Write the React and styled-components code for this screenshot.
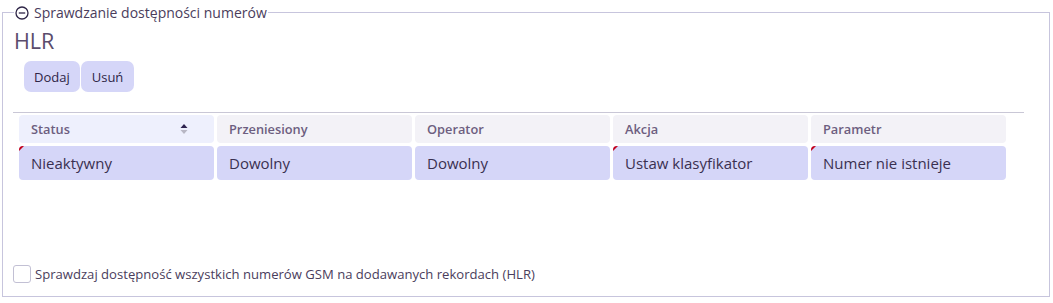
import React from "react";
import styled, { createGlobalStyle } from "styled-components";

const Global = createGlobalStyle`
  html, body { margin: 0; padding: 0; background: #fff; }
  body { font-family: "Open Sans", "DejaVu Sans", sans-serif; }
  * { box-sizing: border-box; }
`;

const Frame = styled.fieldset`
  margin: 5px 3px 0 2px;
  width: 1048px;
  height: 292px;
  border: 1px solid #c7c5dd;
  border-radius: 0;
  padding: 0 0 0 10px;
  display: flex;
  flex-direction: column;
`;

const Legend = styled.legend`
  display: flex;
  align-items: center;
  gap: 5px;
  margin-left: 1px;
  padding: 0 1px;
  font-size: 14px;
  color: #4a3d5c;
  line-height: 15px;
`;

const Title = styled.h2`
  margin: 8px 0 0 1px;
  font-size: 21.5px;
  font-weight: 500;
  color: #5a4c6c;
  line-height: 25px;
`;

const Toolbar = styled.div`
  display: flex;
  gap: 1px;
  margin: 8px 0 0 11px;
`;

const Button = styled.button`
  height: 31px;
  padding: 0 ${(p) => p.$px || 10}px;
  border: none;
  border-radius: 7px;
  background: #d5d6f8;
  color: #2e2547;
  font-family: inherit;
  font-size: 13px;
  font-weight: 500;
`;

const Table = styled.div`
  margin-top: 20px;
  width: 1011px;
  border-top: 1px solid #c9c7d6;
  padding: 2px 0 0 6px;
  display: grid;
  grid-template-columns: repeat(5, 195px);
  column-gap: 3px;
  row-gap: 3px;
`;

const HeadCell = styled.div`
  height: 28px;
  border-radius: 4px;
  background: ${(p) => (p.$sorted ? "#eef0fd" : "#f3f2f7")};
  color: #6d5e80;
  font-size: 12.8px;
  font-weight: 600;
  display: flex;
  align-items: center;
  justify-content: space-between;
  padding: 0 26px 0 12px;
`;

const Cell = styled.div`
  position: relative;
  height: 34px;
  border-radius: 4px;
  background: #d5d6f8;
  color: #3a3050;
  font-size: 15px;
  display: flex;
  align-items: center;
  padding: 0 12px;
  overflow: hidden;
  ${(p) =>
    p.$mark &&
    `&::before {
      content: "";
      position: absolute;
      left: 0;
      top: 0;
      border-style: solid;
      border-width: 5px 5px 0 0;
      border-color: #c4001a transparent transparent transparent;
    }`}
`;

const Footer = styled.label`
  margin-top: auto;
  margin-bottom: 13px;
  display: flex;
  align-items: center;
  gap: 4px;
  font-size: 13.1px;
  color: #4a3d5c;
`;

const Box = styled.span`
  width: 18px;
  height: 18px;
  border: 1px solid #c2c0d4;
  border-radius: 3px;
  background: #fff;
`;

const MinusCircle = () => (
  <svg width="14" height="14" viewBox="0 0 14 14">
    <circle cx="7" cy="7" r="6" fill="none" stroke="#2e2547" strokeWidth="1.3" />
    <line x1="3.8" y1="7" x2="10.2" y2="7" stroke="#2e2547" strokeWidth="1.3" />
  </svg>
);

const SortIcon = () => (
  <svg width="8" height="12" viewBox="0 0 8 12">
    <path d="M4 1 L7.5 5 L0.5 5 Z" fill="#2e2350" />
    <path d="M4 11 L7.5 7 L0.5 7 Z" fill="#b8b7c4" />
  </svg>
);

const heads = ["Status", "Przeniesiony", "Operator", "Akcja", "Parametr"];
const row = [
  { v: "Nieaktywny", mark: true },
  { v: "Dowolny" },
  { v: "Dowolny" },
  { v: "Ustaw klasyfikator", mark: true },
  { v: "Numer nie istnieje", mark: true },
];

export default function App() {
  return (
    <>
      <Global />
      <Frame>
        <Legend>
          <MinusCircle />
          Sprawdzanie dostępności numerów
        </Legend>
        <Title>HLR</Title>
        <Toolbar>
          <Button $px={10}>Dodaj</Button>
          <Button $px={11}>Usuń</Button>
        </Toolbar>
        <Table>
          {heads.map((h, i) => (
            <HeadCell key={h} $sorted={i === 0}>
              {h}
              {i === 0 && <SortIcon />}
            </HeadCell>
          ))}
          {row.map((c, i) => (
            <Cell key={i} $mark={c.mark}>
              {c.v}
            </Cell>
          ))}
        </Table>
        <Footer>
          <Box />
          Sprawdzaj dostępność wszystkich numerów GSM na dodawanych rekordach (HLR)
        </Footer>
      </Frame>
    </>
  );
}
